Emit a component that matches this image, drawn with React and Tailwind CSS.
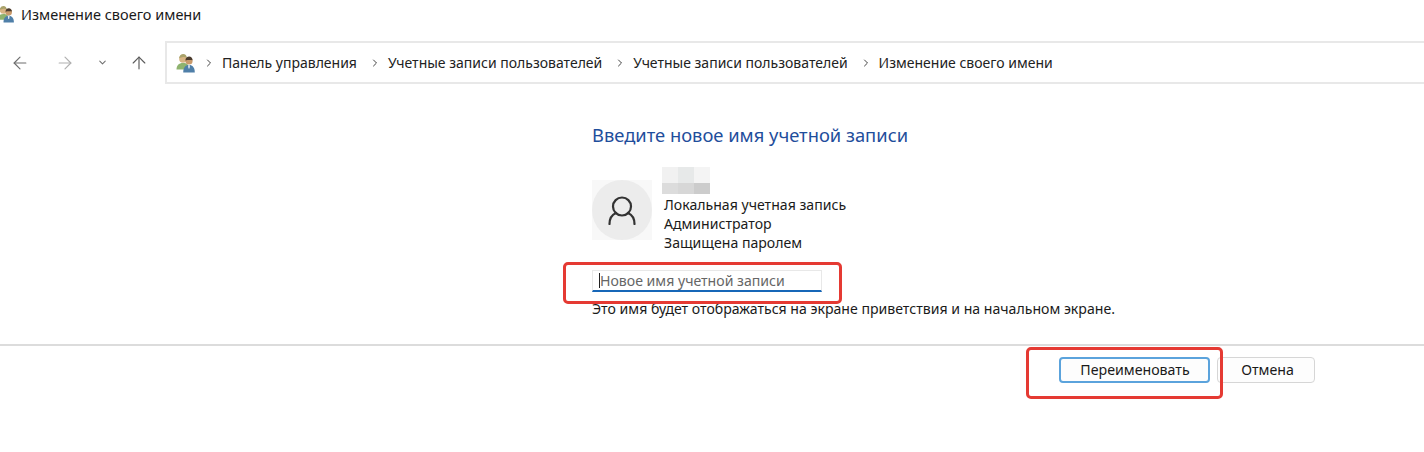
import { ArrowLeft, ArrowRight, ArrowUp, ChevronDown, ChevronRight } from 'lucide-react'

function UsersIcon({ size = 20 }) {
  return (
    <svg width={size} height={size} viewBox="0 0 20 20" className="shrink-0">
      {/* back user */}
      <circle cx="7" cy="6" r="3.8" fill="#d9b483" />
      <path d="M3 5.5C3.3 2.2 5.3 1 7.2 1c2.1 0 3.6 1.4 3.7 4.2-1.2-.9-2.5-1.3-3.7-1.1-1 .2-2.5.6-4.2 1.4z" fill="#a9a26a" />
      <path d="M0.5 16.5c0-4 2.2-6.5 6.5-6.5s5.5 2 5.5 4v2.5z" fill="#8fb36e" />
      {/* front user */}
      <circle cx="13" cy="8" r="3.6" fill="#c99a6b" />
      <path d="M9.4 7.5c.2-2.8 1.9-3.9 3.7-3.9 2 0 3.4 1.4 3.5 3.7-1.7-.4-4.6-.6-7.2.2z" fill="#4a3a2c" />
      <path d="M7.2 19.5c0-5 2.2-7.5 5.8-7.5s5.8 2.5 5.8 7.5z" fill="#4f7fa8" />
      <path d="M12 12.2h2l-.5 3.4h-1z" fill="#e8eef4" />
    </svg>
  )
}

function Crumb({ children }) {
  return (
    <>
      <ChevronRight size={12} strokeWidth={2} className="mx-[7px] shrink-0 text-[#444]" />
      <span className="mr-[5px]">{children}</span>
    </>
  )
}

function RedBox({ className }) {
  return <div className={`absolute rounded-[5px] border-[3px] border-[#e53a33] ${className}`} />
}

const blurCells = ['bg-[#f1f1f1]', 'bg-[#e7e9e9]', 'bg-[#f4f4f4]', 'bg-[#dcdcdc]', 'bg-[#d7d7d7]', 'bg-[#cccccc]']

export default function App() {
  return (
    <div className="relative h-[452px] w-[1424px] overflow-hidden bg-white font-['Noto_Sans',sans-serif] text-[14.1px] text-[#1a1a1a]">
      {/* Title bar */}
      <div className="flex h-[41px] items-start pt-[5px] -ml-[3px]">
        <UsersIcon size={18} />
        <span className="ml-[6px] text-[14.5px] leading-[19px]">Изменение своего имени</span>
      </div>

      {/* Navigation */}
      <div className="flex h-[43px] items-center">
        <div className="flex w-[165px] items-center pl-[10px] text-[#6e6e6e]">
          <ArrowLeft size={20} strokeWidth={1.4} />
          <ArrowRight size={20} strokeWidth={1.4} className="ml-[25px] text-[#b0b0b0]" />
          <ChevronDown size={11} strokeWidth={2.2} className="ml-[22px]" />
          <ArrowUp size={20} strokeWidth={1.4} className="ml-[21px] text-[#5c5c5c]" />
        </div>
        <div className="flex h-[43px] flex-1 items-center border-y-2 border-l-2 border-[#e8e8e8] pl-[9px]">
          <UsersIcon size={20} />
          <div className="flex items-center text-[14px] text-[#222]">
            <Crumb>Панель управления</Crumb>
            <Crumb>Учетные записи пользователей</Crumb>
            <Crumb>Учетные записи пользователей</Crumb>
            <Crumb>Изменение своего имени</Crumb>
          </div>
        </div>
      </div>

      {/* Form */}
      <div className="ml-[592px] flex flex-col">
        <h1 className="mt-[39px] text-[18.35px] leading-[24px] font-normal text-[#1f4e9c]">Введите новое имя учетной записи</h1>
        <div className="mt-[20px] flex">
          <div className="mt-[13px] flex h-[60px] w-[60px] items-center justify-center bg-[#f8f8f8]">
            <div className="flex h-[60px] w-[60px] items-center justify-center rounded-full bg-[#ececec]">
              <svg width="28" height="29" viewBox="0 0 28 29" fill="none" stroke="#333" strokeWidth="2.2" strokeLinecap="round">
                <circle cx="14" cy="10.5" r="9" />
                <path d="M1.5 28C1.5 22.5 4 18.8 8 17" />
                <path d="M26.5 28C26.5 22.5 24 18.8 20 17" />
              </svg>
            </div>
          </div>
          <div className="ml-[10px] flex flex-col">
            <div className="grid h-[27px] w-[48px] grid-cols-3 grid-rows-[16px_11px]">
              {blurCells.map((c, i) => (
                <div key={i} className={c} />
              ))}
            </div>
            <div className="ml-[2px] leading-[19px]">
              <div className="mt-[1px]">Локальная учетная запись</div>
              <div>Администратор</div>
              <div>Защищена паролем</div>
            </div>
          </div>
        </div>
        <div className="mt-[18px] flex h-[22px] w-[230px] items-center border border-b-2 border-[#e8e8e8] border-b-[#1767b8] pl-[6px] text-[#666]">
          <div className="h-[15px] w-px bg-[#222]" />
          Новое имя учетной записи
        </div>
        <p className="mt-[7px] leading-[19px]">Это имя будет отображаться на экране приветствия и на начальном экране.</p>
      </div>

      {/* Footer */}
      <div className="mt-[26px] flex h-[2px] bg-[#dcdcdc]" />
      <div className="mt-[11px] flex justify-end gap-[7px] pr-[109px]">
        <button className="h-[26px] w-[151px] rounded-[4px] border-2 border-[#5ba3dc] bg-[#fdfdfd] pl-[1px] text-[14.2px] leading-none">Переименовать</button>
        <button className="h-[26px] w-[98px] rounded-[4px] border border-[#d6d6d6] bg-[#fdfdfd] pl-[3px] text-[14.2px] leading-none">Отмена</button>
      </div>

      {/* Annotations */}
      <RedBox className="left-[563px] top-[262px] h-[42px] w-[279px]" />
      <RedBox className="left-[1026px] top-[347px] h-[52px] w-[197px]" />
    </div>
  )
}
